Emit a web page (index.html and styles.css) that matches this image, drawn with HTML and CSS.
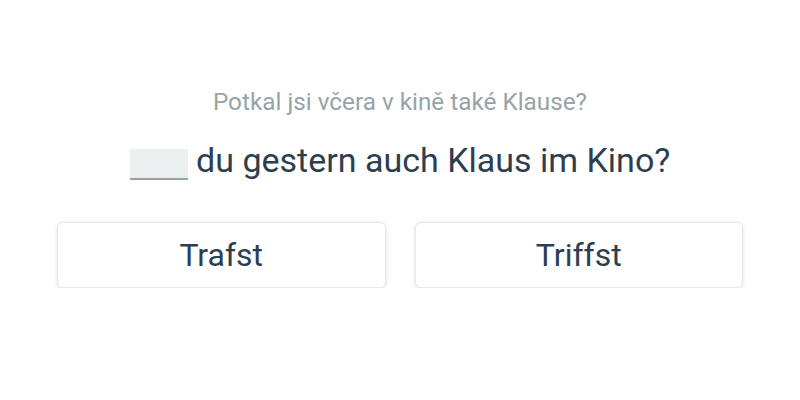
FILE: index.html
```html
<!DOCTYPE html>
<html>
<head>
    <meta charset="utf-8">
    <title>Cvičení</title>
    <link rel="stylesheet" href="styles.css">
</head>
<body>
    <div class="exercise">
        <p class="hint">Potkal jsi včera v kině také Klause?</p>
        <p class="sentence"><span class="blank"></span> du gestern auch Klaus im Kino?</p>
        <div class="choices">
            <button class="choice">Trafst</button>
            <button class="choice">Triffst</button>
        </div>
    </div>
</body>
</html>
```
FILE: styles.css
```css
body {
  margin: 0;
  background: #fff;
  font-family: Roboto, "Noto Sans", sans-serif;
  color: #2c3e50;
}

.exercise {
  padding: 88px 57px 0;
  text-align: center;
}

.hint {
  margin: 0;
  font-size: 24.3px;
  line-height: 28px;
  color: #95a5a6;
}

.sentence {
  margin: 24px 0 0;
  font-size: 34px;
  line-height: 40px;
  color: #2c3e50;
}

.blank {
  display: inline-block;
  width: 58px;
  height: 29px;
  vertical-align: -8px;
  background: #ecf0f1;
  border-bottom: 2px solid #95a5a6;
}

.choices {
  display: flex;
  gap: 29px;
  margin-top: 42px;
}

.choice {
  flex: 1;
  height: 66px;
  background: #fff;
  border: 1px solid #e6e8e9;
  border-radius: 6px;
  box-shadow: 0 1px 4px rgba(0, 0, 0, 0.12);
  font-family: Roboto, "Noto Sans", sans-serif;
  font-size: 32px;
  color: #2c3e50;
}
```
